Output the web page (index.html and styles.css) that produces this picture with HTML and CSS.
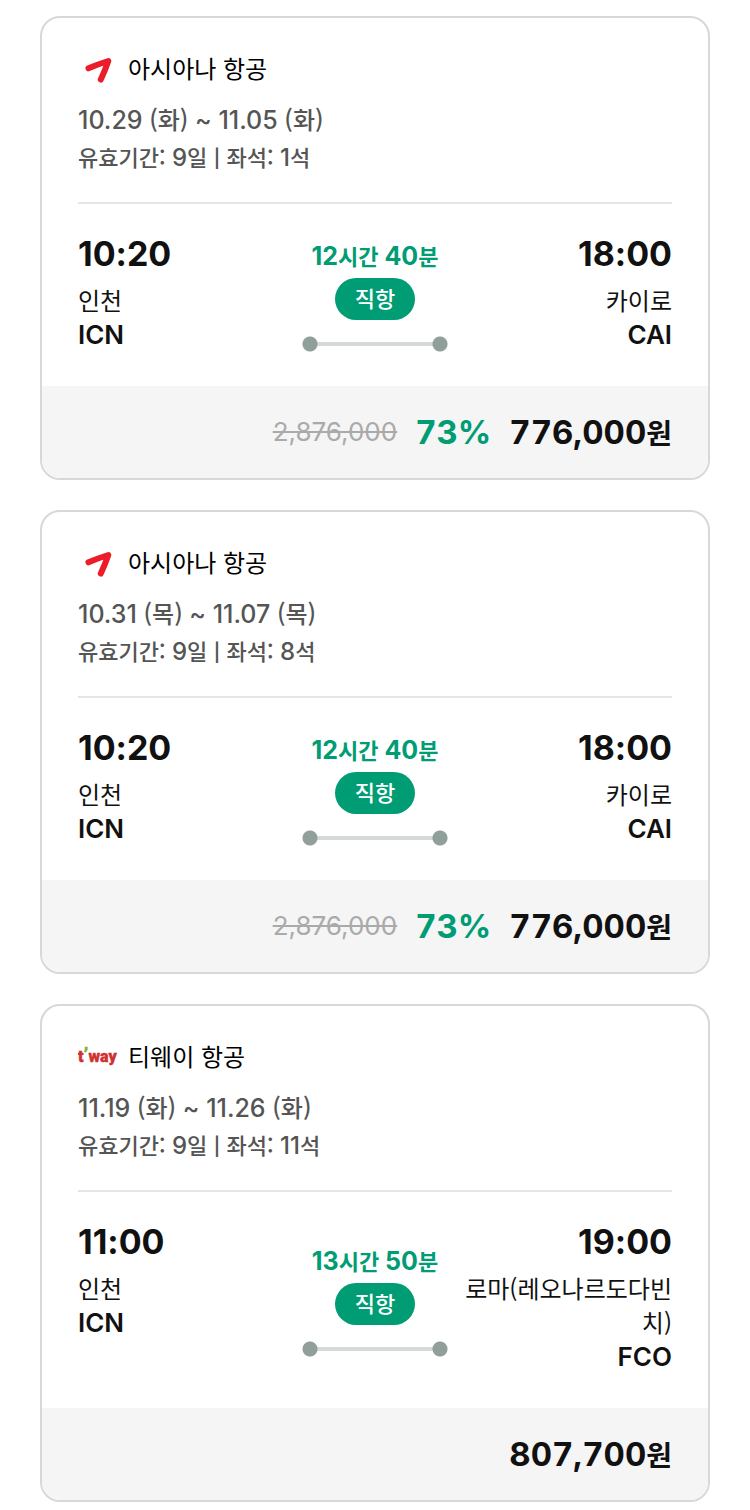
FILE: index.html
```
<!DOCTYPE html>
<html lang="ko">
<head>
<meta charset="utf-8">
<meta name="viewport" content="width=device-width, initial-scale=1">
<title>항공권 목록</title>
<link rel="stylesheet" href="styles.css">
</head>
<body>
<main class="list">
  <article class="card">
    <header class="head">
      <h2 class="airline">
        <svg class="logo" viewBox="0 0 40 32" aria-hidden="true"><path class="wing" d="M10.500 16.300Q20 12.200 30.300 9Q27 18.500 22.800 27.600"/></svg>
        아시아나 항공
      </h2>
      <p class="meta dates">10.29 <span class="ko">(화)</span> ~ 11.05 <span class="ko">(화)</span></p>
      <p class="meta"><span class="ko">유효기간:</span> 9<span class="ko">일</span> <span class="bar">|</span> <span class="ko">좌석:</span> 1<span class="ko">석</span></p>
    </header>
    <div class="route">
      <div class="stop">
        <time class="time">10:20</time>
        <span class="city">인천</span>
        <span class="code">ICN</span>
      </div>
      <div class="leg">
        <span class="duration">12<span class="ko">시간</span> 40<span class="ko">분</span></span>
        <span class="badge">직항</span>
        <span class="track"></span>
      </div>
      <div class="stop stop-end">
        <time class="time">18:00</time>
        <span class="city">카이로</span>
        <span class="code">CAI</span>
      </div>
    </div>
    <footer class="foot">
      <del class="old">2,876,000</del>
      <span class="sale">73%</span>
      <strong class="price">776,000<span class="won">원</span></strong>
    </footer>
  </article>

  <article class="card">
    <header class="head">
      <h2 class="airline">
        <svg class="logo" viewBox="0 0 40 32" aria-hidden="true"><path class="wing" d="M10.500 16.300Q20 12.200 30.300 9Q27 18.500 22.800 27.600"/></svg>
        아시아나 항공
      </h2>
      <p class="meta dates">10.31 <span class="ko">(목)</span> ~ 11.07 <span class="ko">(목)</span></p>
      <p class="meta"><span class="ko">유효기간:</span> 9<span class="ko">일</span> <span class="bar">|</span> <span class="ko">좌석:</span> 8<span class="ko">석</span></p>
    </header>
    <div class="route">
      <div class="stop">
        <time class="time">10:20</time>
        <span class="city">인천</span>
        <span class="code">ICN</span>
      </div>
      <div class="leg">
        <span class="duration">12<span class="ko">시간</span> 40<span class="ko">분</span></span>
        <span class="badge">직항</span>
        <span class="track"></span>
      </div>
      <div class="stop stop-end">
        <time class="time">18:00</time>
        <span class="city">카이로</span>
        <span class="code">CAI</span>
      </div>
    </div>
    <footer class="foot">
      <del class="old">2,876,000</del>
      <span class="sale">73%</span>
      <strong class="price">776,000<span class="won">원</span></strong>
    </footer>
  </article>

  <article class="card">
    <header class="head">
      <h2 class="airline">
        <svg class="logo" viewBox="0 0 40 32" role="img" aria-label="t'way"><text class="tway" x="0" y="22">t<tspan class="tick">’</tspan>way</text></svg>
        티웨이 항공
      </h2>
      <p class="meta dates">11.19 <span class="ko">(화)</span> ~ 11.26 <span class="ko">(화)</span></p>
      <p class="meta"><span class="ko">유효기간:</span> 9<span class="ko">일</span> <span class="bar">|</span> <span class="ko">좌석:</span> 11<span class="ko">석</span></p>
    </header>
    <div class="route">
      <div class="stop">
        <time class="time">11:00</time>
        <span class="city">인천</span>
        <span class="code">ICN</span>
      </div>
      <div class="leg">
        <span class="duration">13<span class="ko">시간</span> 50<span class="ko">분</span></span>
        <span class="badge">직항</span>
        <span class="track"></span>
      </div>
      <div class="stop stop-end">
        <time class="time">19:00</time>
        <span class="city">로마(레오나르도다빈치)</span>
        <span class="code">FCO</span>
      </div>
    </div>
    <footer class="foot">
      <strong class="price">807,700<span class="won">원</span></strong>
    </footer>
  </article>
</main>
</body>
</html>
```
FILE: styles.css
```
* {
  box-sizing: border-box;
}

body {
  margin: 0;
  background: #fff;
  color: #111;
  font-family: Inter, "Noto Sans CJK KR", sans-serif;
  font-variant-ligatures: no-contextual;
}

.list {
  display: flex;
  flex-direction: column;
  gap: 30px;
  padding: 16px 40px 8px;
}

.card {
  border: 2px solid #d5d9d8;
  border-radius: 20px;
  overflow: hidden;
}

.head {
  margin: 0 36px;
  padding: 34px 0 25px;
  border-bottom: 2px solid #e5e5e5;
}

.airline {
  display: flex;
  align-items: center;
  gap: 10px;
  margin: 0 0 17px;
  color: #000;
  font-family: "Noto Sans CJK KR", sans-serif;
  font-size: 24px;
  font-weight: 400;
  line-height: 32px;
}

.logo {
  width: 40px;
  height: 32px;
  flex: none;
}

.wing {
  fill: none;
  stroke: #ec1c2a;
  stroke-width: 6;
  stroke-linecap: round;
  stroke-linejoin: round;
}

.tway {
  fill: #cf3030;
  stroke: #cf3030;
  stroke-width: 0.4;
  font-family: Roboto, sans-serif;
  font-size: 16px;
  font-weight: 900;
}

.tick {
  fill: #7fb539;
  stroke: #7fb539;
  font-size: 20px;
}

.meta {
  margin: 0;
  color: #555;
  font-size: 24px;
  font-weight: 500;
  line-height: 38px;
}

.ko {
  font-family: "Noto Sans CJK KR", sans-serif;
  font-size: 22px;
  line-height: 1;
}

.dates {
  font-size: 25px;
}

.dates .ko {
  font-size: 24px;
}

.bar {
  font-size: 18px;
  font-weight: 600;
  line-height: 1;
  vertical-align: 1px;
}

.route {
  display: grid;
  grid-template-columns: 1fr 146px 1fr;
  gap: 16px;
  align-items: center;
  padding: 30px 36px 34px;
}

.stop {
  display: flex;
  flex-direction: column;
  align-self: start;
}

.stop-end {
  text-align: right;
}

.time {
  margin-bottom: 9px;
  font-size: 34px;
  font-weight: 700;
  line-height: 40px;
}

.city {
  margin-bottom: 1px;
  font-family: "Noto Sans CJK KR", sans-serif;
  font-size: 24px;
  line-height: 34px;
}

.code {
  font-size: 26px;
  font-weight: 600;
  line-height: 34px;
}

.leg {
  display: flex;
  flex-direction: column;
  align-items: center;
  padding-top: 4px;
}

.duration {
  color: #009c74;
  font-size: 25px;
  font-weight: 700;
  line-height: 36px;
  white-space: nowrap;
}

.badge {
  margin: 4px 0 16px;
  padding: 0 20px 4px;
  border-radius: 21px;
  background: #009c74;
  color: #fff;
  font-family: "Noto Sans CJK KR", sans-serif;
  font-size: 22px;
  font-weight: 500;
  line-height: 38px;
}

.track {
  width: 100%;
  height: 16px;
  background:
    radial-gradient(circle at 8px 8px, #919f9a 7px, transparent 8px),
    radial-gradient(circle at calc(100% - 8px) 8px, #919f9a 7px, transparent 8px),
    linear-gradient(#d5d9d8, #d5d9d8) center / calc(100% - 16px) 4px no-repeat;
}

.foot {
  display: flex;
  align-items: center;
  justify-content: flex-end;
  gap: 18px;
  padding: 24px 36px;
  background: #f5f5f5;
  line-height: 44px;
}

.old {
  color: #aaa;
  font-size: 26px;
}

.sale,
.price {
  font-size: 33px;
  font-weight: 700;
  font-variant-numeric: tabular-nums;
}

.sale {
  color: #009c74;
}

.won {
  font-family: "Noto Sans CJK KR", sans-serif;
  font-size: 28px;
  line-height: 1;
}
```
